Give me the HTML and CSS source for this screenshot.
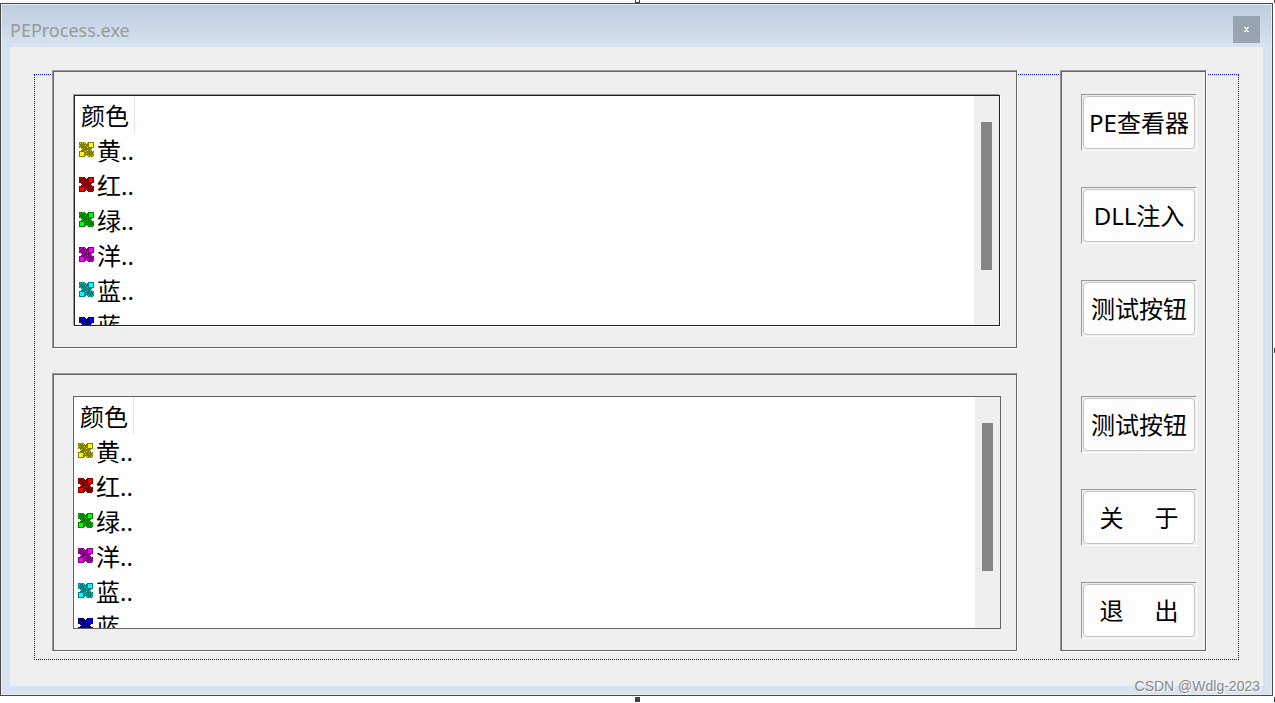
FILE: index.html
```html
<!DOCTYPE html>
<html lang="zh-CN">
<head>
<meta charset="utf-8">
<title>PEProcess.exe</title>
<link rel="stylesheet" href="styles.css">
</head>
<body>
<svg class="defs" aria-hidden="true">
  <symbol id="cluster" viewBox="0 0 15 15">
    <path class="dark" d="M0 0H6V1H7V2H8V1H9V0H15V6H13V7H12V8H13V9H15V14H14V15H9V14H8V13H7V14H6V15H0V9H2V8H3V7H2V6H0Z"/>
    <path class="bright" d="M10 1H14V5H10ZM1 10H5V14H1Z"/>
    <path class="bright dots" d="M1 1h1v1h-1zM3 0h1v1h-1zM5 1h1v1h-1zM0 3h1v1h-1zM1 5h1v1h-1zM3 6h1v1h-1zM6 3h1v1h-1zM8 5h1v1h-1zM8 8h1v1h-1zM6 9h1v1h-1zM7 11h1v1h-1zM9 13h1v1h-1zM11 14h1v1h-1zM13 13h1v1h-1zM14 11h1v1h-1zM13 9h1v1h-1zM11 8h1v1h-1z"/>
  </symbol>
</svg>
<div class="screen">
  <span class="handle handle-top"></span>
  <main class="window">
    <header class="titlebar">
      <h1 class="title">PEProcess.exe</h1>
      <button class="close" type="button" aria-label="关闭"><svg viewBox="0 0 5 5" aria-hidden="true"><path d="M0 0H2V1H3V0H5V1H4V2H3V3H4V4H5V5H3V4H2V5H0V4H1V3H2V2H1V1H0Z"/></svg></button>
    </header>
    <div class="client">
      <div class="frame">
        <div class="lists">
          <section class="panel">
            <div class="list list-focused">
              <table class="colors">
                <thead><tr><th scope="col">颜色</th></tr></thead>
                <tbody>
                  <tr><td><svg class="icon yellow"><use href="#cluster"/></svg>黄..</td></tr>
                  <tr><td><svg class="icon red"><use href="#cluster"/></svg>红..</td></tr>
                  <tr><td><svg class="icon green"><use href="#cluster"/></svg>绿..</td></tr>
                  <tr><td><svg class="icon magenta"><use href="#cluster"/></svg>洋..</td></tr>
                  <tr><td><svg class="icon cyan"><use href="#cluster"/></svg>蓝..</td></tr>
                  <tr><td><svg class="icon blue"><use href="#cluster"/></svg>蓝</td></tr>
                </tbody>
              </table>
              <div class="scrollbar"><div class="thumb"></div></div>
            </div>
          </section>
          <section class="panel">
            <div class="list">
              <table class="colors">
                <thead><tr><th scope="col">颜色</th></tr></thead>
                <tbody>
                  <tr><td><svg class="icon yellow"><use href="#cluster"/></svg>黄..</td></tr>
                  <tr><td><svg class="icon red"><use href="#cluster"/></svg>红..</td></tr>
                  <tr><td><svg class="icon green"><use href="#cluster"/></svg>绿..</td></tr>
                  <tr><td><svg class="icon magenta"><use href="#cluster"/></svg>洋..</td></tr>
                  <tr><td><svg class="icon cyan"><use href="#cluster"/></svg>蓝..</td></tr>
                  <tr><td><svg class="icon blue"><use href="#cluster"/></svg>蓝</td></tr>
                </tbody>
              </table>
              <div class="scrollbar"><div class="thumb"></div></div>
            </div>
          </section>
        </div>
        <nav class="panel actions">
          <div class="group">
            <div class="well"><button class="action" type="button">PE查看器</button></div>
            <div class="well"><button class="action" type="button">DLL注入</button></div>
            <div class="well"><button class="action" type="button">测试按钮</button></div>
          </div>
          <div class="group">
            <div class="well"><button class="action" type="button">测试按钮</button></div>
            <div class="well"><button class="action" type="button">关     于</button></div>
            <div class="well"><button class="action" type="button">退     出</button></div>
          </div>
        </nav>
      </div>
    </div>
  </main>
  <span class="handle handle-right"></span>
  <span class="handle handle-corner"></span>
  <span class="handle handle-end"></span>
  <span class="handle handle-bottom"></span>
  <span class="watermark">CSDN @Wdlg-2023</span>
</div>
</body>
</html>
```
FILE: styles.css
```css
* { box-sizing: border-box; }
body {
  margin: 0;
  background: #fff;
  color: #000;
  font-family: "Noto Sans", "Noto Sans CJK SC", sans-serif;
}
.defs { display: none; }
.screen {
  position: relative;
  min-height: 100vh;
  padding: 3px 2px 7px 0;
  overflow: hidden;
}
.window {
  border: 1px solid #4b4b4f;
  background: linear-gradient(#bccddc, #d7e3f0 44px, #d7e3f0);
  box-shadow: inset 0 0 0 1px #e5ebf2;
  padding: 0 9px 9px;
}
.titlebar {
  display: flex;
  align-items: center;
  justify-content: space-between;
  height: 43px;
  padding: 8px 3px 0 0;
}
.title {
  margin: 0;
  color: #999;
  font-size: 18px;
  line-height: 24px;
  font-weight: 400;
}
.close {
  display: grid;
  place-items: center;
  width: 27px;
  height: 27px;
  padding: 0;
  border: 0;
  background: #98a4af;
}
.close svg { width: 5px; height: 5px; fill: #fff; }
.client {
  background: #efefef;
  padding: 27px 24px 26px;
}
.frame {
  display: flex;
  gap: 43px;
  border: 1px dotted #00f;
  padding: 0 32px 8px 17px;
}
.lists {
  display: flex;
  flex: 1;
  flex-direction: column;
  gap: 25px;
  margin-top: -5px;
}
.panel {
  background: #efefef;
  border: 1px solid #646464;
  border-top-color: #999;
  border-left-color: #999;
  box-shadow: inset 1px 1px #646464, 1px 1px #fff;
  padding: 22px 15px 21px 20px;
}
.list {
  display: flex;
  justify-content: space-between;
  height: 233px;
  background: #fff;
  border: 1px solid #646464;
  overflow: hidden;
}
.list-focused {
  border-color: #222;
  margin: 2px 1px 0;
  height: 231px;
  box-shadow: -1px -1px #999, 1px 1px #fff;
}
.colors {
  border-collapse: collapse;
  font-size: 24px;
  line-height: 35px;
}
.colors th {
  height: 37px;
  padding: 2px 5px 0 6px;
  border-right: 1px solid #e5e5e5;
  font-weight: 400;
  line-height: 35px;
  text-align: left;
}
.colors td { height: 35px; padding: 0 0 0 4px; white-space: nowrap; }
.icon {
  width: 15px;
  height: 15px;
  margin-right: 3px;
  vertical-align: 3px;
  shape-rendering: crispEdges;
}
.dark { fill: var(--dark); }
.bright { fill: var(--bright); }
.dots { opacity: .7; }
.yellow { --dark: #808000; --bright: #ff0; }
.red { --dark: #800000; --bright: #f00; }
.green { --dark: #008000; --bright: #0f0; }
.magenta { --dark: #800080; --bright: #f0f; }
.cyan { --dark: #008080; --bright: #0ff; }
.blue { --dark: #000080; --bright: #00f; }
.scrollbar {
  width: 25px;
  background: #efefef;
  padding: 26px 7px;
}
.thumb {
  width: 11px;
  height: 148px;
  background: #858585;
}
.actions {
  display: flex;
  flex-direction: column;
  gap: 59px;
  margin-top: -5px;
  width: 146px;
  padding: 23px 8px 10px 20px;
}
.group { display: grid; gap: 36px; }
.well {
  height: 57px;
  border: 1px solid #fff;
  border-top-color: #999;
  border-left-color: #999;
  padding: 1px;
}
.action {
  width: 100%;
  height: 100%;
  padding: 0;
  border: 1px solid #c4c4c4;
  border-radius: 4px;
  background: #fdfdfd;
  color: #000;
  font: inherit;
  font-size: 24px;
  line-height: 35px;
  white-space: pre;
}
.handle { position: absolute; background: #434343; }
.handle-top { top: -2px; left: 50%; width: 5px; height: 5px; margin-left: -3px; background: #fff; border: 1px solid #434343; }
.handle-bottom { bottom: 1px; left: 50%; width: 5px; height: 5px; margin-left: -3px; }
.handle-right { top: 50%; right: 0; width: 1px; height: 5px; margin-top: -4px; }
.handle-corner { top: 0; right: 0; width: 1px; height: 3px; }
.handle-end { bottom: 1px; right: 0; width: 1px; height: 5px; }
.watermark {
  position: absolute;
  right: 15px;
  bottom: 6px;
  color: #888;
  font: 14px/22px "Liberation Sans", sans-serif;
  text-shadow: 1px 1px #fff;
}
```
